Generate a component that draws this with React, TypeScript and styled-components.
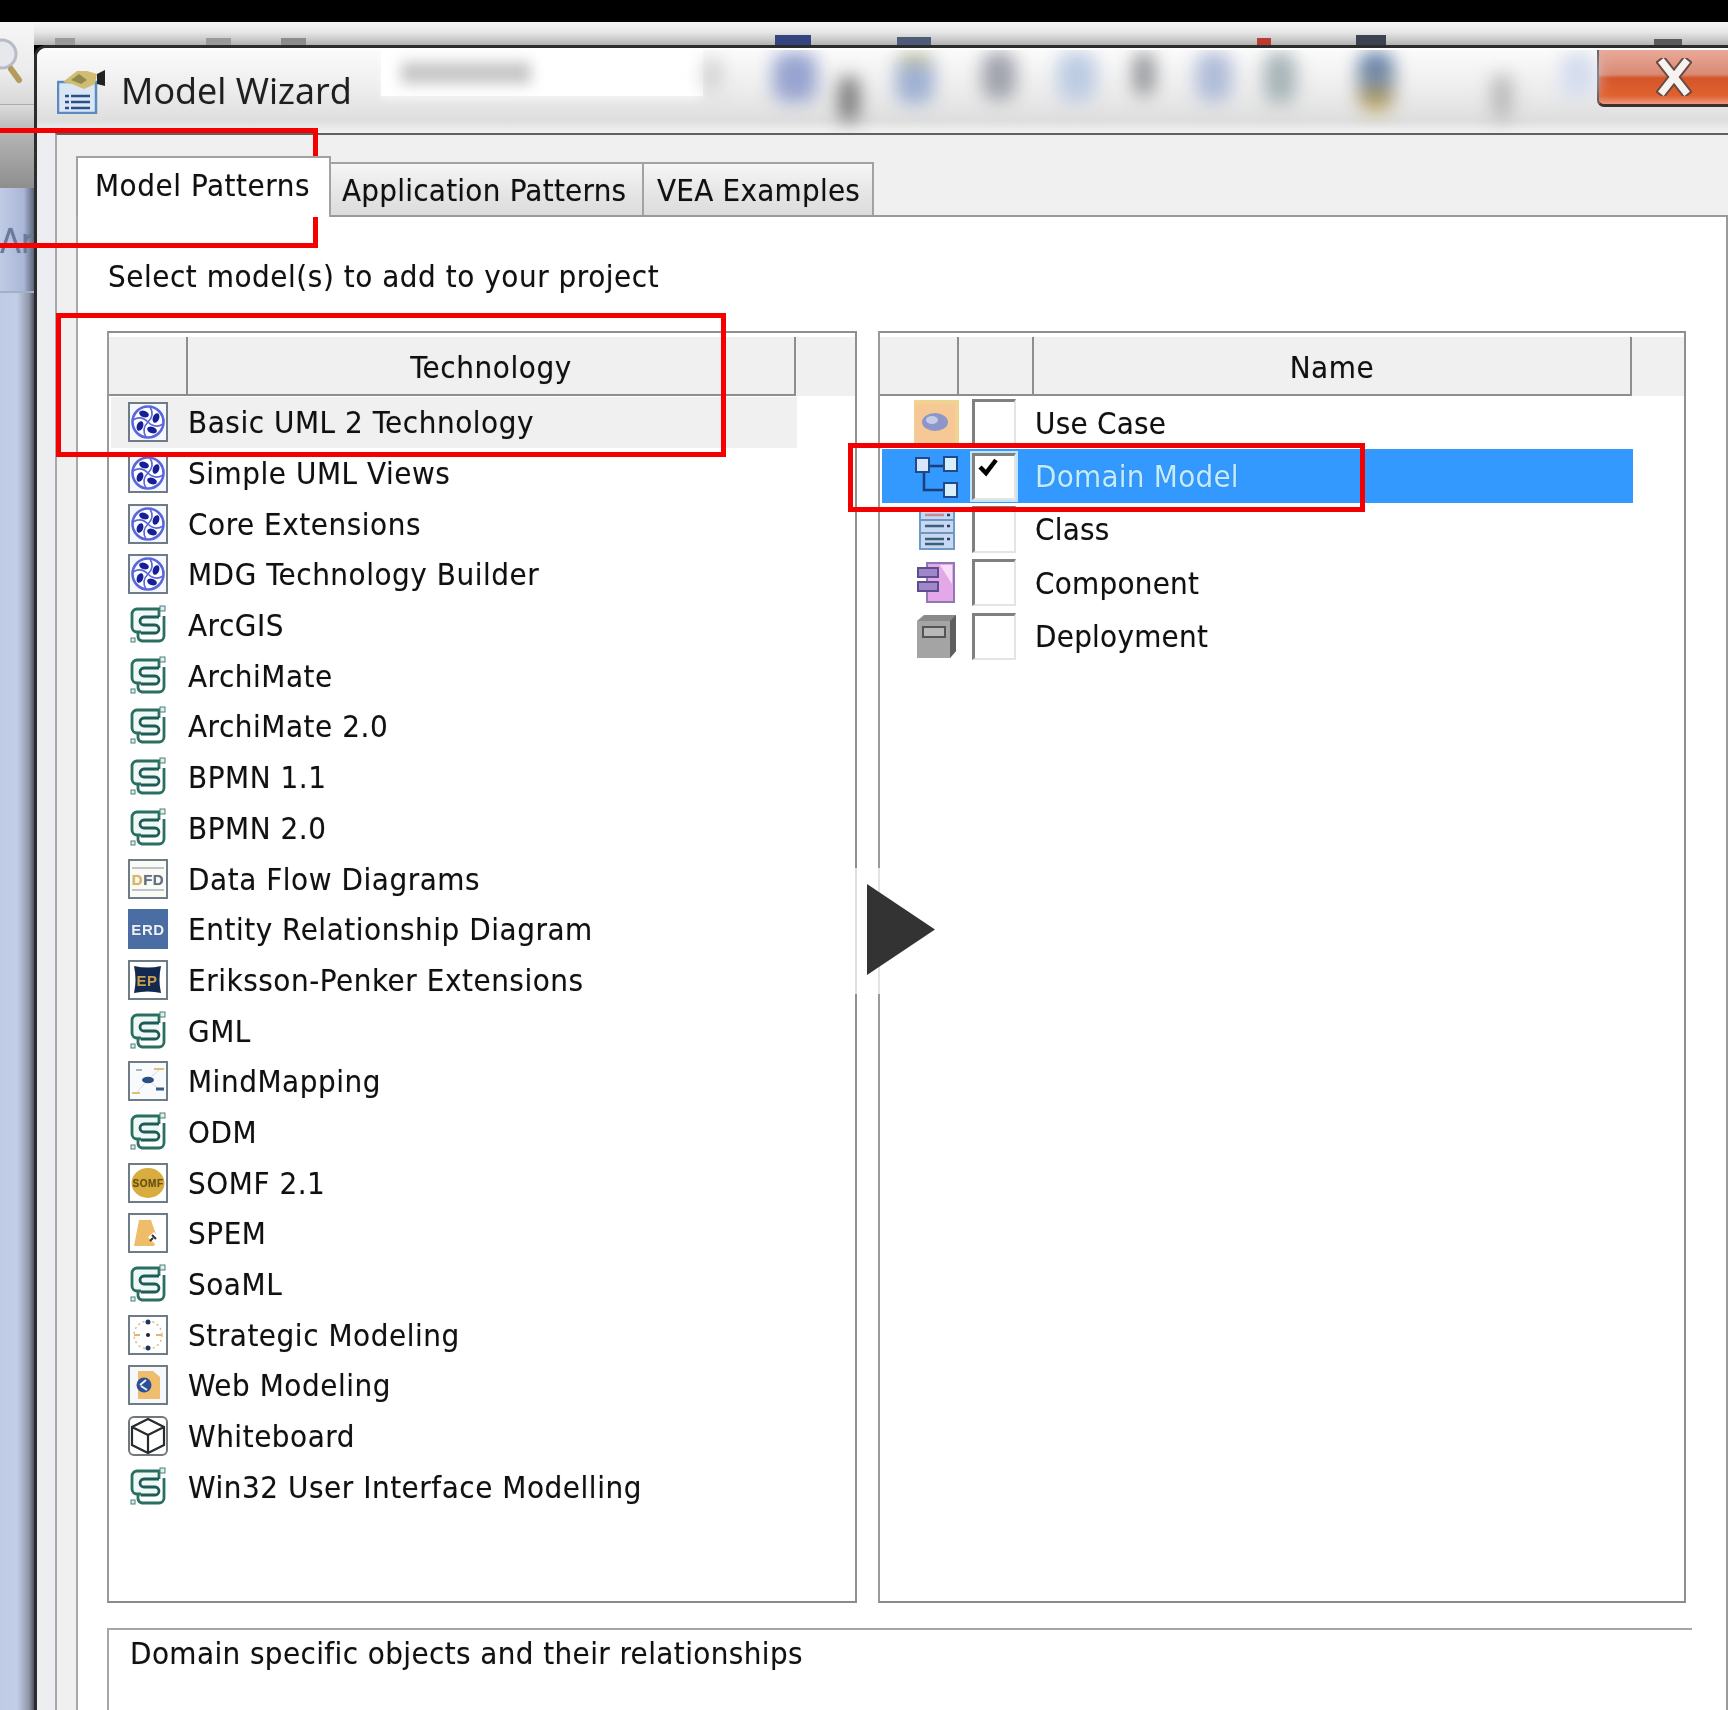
import React from "react";
import styled, { createGlobalStyle } from "styled-components";

const Global = createGlobalStyle`
  html, body { margin: 0; padding: 0; background: #000; }
  * { box-sizing: border-box; }
`;

const FONT = `"DejaVu Sans Condensed", "DejaVu Sans", sans-serif`;

const Screen = styled.div`
  position: relative;
  width: 1728px;
  height: 1710px;
  overflow: hidden;
  background: #000;
  padding-top: 22px;
  font-family: ${FONT};
  color: #101010;
  text-shadow: 0 0 1px rgba(0, 0, 0, 0.3);
  filter: blur(0.5px);
`;
const Desktop = styled.div`
  display: grid;
  grid-template-columns: 34px 1fr;
  grid-template-rows: 23px 1fr;
  height: 1688px;
`;
const Backdrop = styled.div`
  grid-row: 1 / 3;
  display: flex;
  flex-direction: column;
  overflow: hidden;
`;
const BackTop = styled.div`
  height: 83px;
  padding-top: 13px;
  border-bottom: 1px solid #aaa;
  background: linear-gradient(#f6f6f6, #ececec 60%, #d8d8d8);
`;
const BackGray = styled.div`
  height: 83px;
  background: linear-gradient(#dcdcdc, #b4b4b4 35%, #8e8e8e);
`;
const BackBlue = styled.div`
  height: 105px;
  padding-top: 33px;
  border-bottom: 2px solid #a4aec4;
  background: linear-gradient(90deg, #c0cce6 0, #a9b6d6 70%, #5d6578 100%);
  color: #6c7a9a;
  font-size: 34px;
  line-height: 40px;
  white-space: nowrap;
`;
const BackRest = styled.div`
  flex: 1;
  background: linear-gradient(90deg, #bfcbe6 0, #c2cde6 50%, #8e96a8 85%, #4e5460 100%);
`;
const TopStrip = styled.div`
  display: flex;
  align-items: flex-end;
  background: linear-gradient(#f6f6f6, #e6e6e6 45%, #b4b4b4);
  overflow: hidden;
`;
const Peek = styled.div<{ $gap: number; $w: number; $h: number; $c: string }>`
  flex: none;
  margin-left: ${(p) => p.$gap}px;
  width: ${(p) => p.$w}px;
  height: ${(p) => p.$h}px;
  background: ${(p) => p.$c};
`;
const Window = styled.div`
  display: flex;
  flex-direction: column;
  min-height: 0;
  border-left: 3px solid #2c2c2c;
  border-top: 3px solid #2c2c2c;
  border-top-left-radius: 12px;
  background: linear-gradient(90deg, #eceef2, #e6e8ea);
  overflow: hidden;
`;
const TitleBar = styled.div`
  flex: none;
  display: flex;
  align-items: flex-start;
  height: 85px;
  border-top: 2px solid #fff;
  background: linear-gradient(#fbfbfb, #ececec 50%, #dedede 85%, #f2f2f2);
  overflow: hidden;
`;
const TitleIcon = styled.svg`
  flex: none;
  width: 50px;
  height: 46px;
  margin: 18px 0 0 20px;
`;
const TitleText = styled.div`
  flex: none;
  width: 244px;
  margin: 19px 0 0 14px;
  font-family: "Open Sans", sans-serif;
  font-size: 36px;
  line-height: 44px;
  color: #1e1e1e;
  white-space: nowrap;
`;
const WhitePatch = styled.div`
  flex: none;
  display: flex;
  align-items: center;
  width: 322px;
  height: 46px;
  margin-left: 16px;
  padding-left: 20px;
  background: #fff;
  box-shadow: 0 4px 8px rgba(255, 255, 255, 0.5);
`;
const PatchSmudge = styled.div`
  width: 130px;
  height: 22px;
  background: #c6c6c6;
  filter: blur(7px);
`;
const Smudge = styled.div<{ $gap: number; $w: number; $h: number; $top: number; $c: string }>`
  flex: none;
  width: ${(p) => p.$w}px;
  height: ${(p) => p.$h}px;
  margin: ${(p) => p.$top}px 0 0 ${(p) => p.$gap}px;
  border-radius: 14px;
  background: ${(p) => p.$c};
  filter: blur(9px);
`;
const CloseButton = styled.div`
  flex: none;
  margin-left: auto;
  display: flex;
  align-items: center;
  justify-content: center;
  padding-left: 20px;
  width: 131px;
  height: 57px;
  border-left: 2px solid #555;
  border-bottom: 3px solid #40302c;
  border-bottom-left-radius: 7px;
  background: linear-gradient(#e9aa98, #d98a74 45%, #d5552a 52%, #e0622f 85%, #eb9a82);
`;
const Client = styled.div`
  flex: 1;
  min-height: 0;
  display: flex;
  flex-direction: column;
  margin-left: 18px;
  padding: 21px 0 0 19px;
  border-left: 2px solid #a8a8a8;
  border-top: 2px solid #606060;
  background: #f0f0f0;
`;
const TabRow = styled.div`
  flex: none;
  display: flex;
  align-items: flex-end;
  height: 59px;
  position: relative;
  z-index: 1;
`;
const Tab = styled.div<{ $active?: boolean; $w: number; $pad: number; $ls: number }>`
  flex: none;
  width: ${(p) => p.$w}px;
  height: ${(p) => (p.$active ? 61 : 53)}px;
  margin-bottom: ${(p) => (p.$active ? -2 : 0)}px;
  padding-top: ${(p) => (p.$active ? 7 : 6)}px;
  padding-left: ${(p) => p.$pad}px;
  border: 2px solid #a2a2a2;
  border-bottom: 0;
  border-left-width: ${(p) => (p.$active ? 2 : 0)}px;
  background: ${(p) => (p.$active ? "#fff" : "linear-gradient(#f6f6f6, #e6e6e6 55%, #dcdcdc)")};
  font-size: 31px;
  letter-spacing: ${(p) => p.$ls}px;
  line-height: 40px;
  white-space: nowrap;
`;
const Page = styled.div`
  flex: 1;
  min-height: 0;
  display: flex;
  flex-direction: column;
  padding: 39px 0 0 29px;
  border-top: 2px solid #9a9a9a;
  border-left: 2px solid #a8a8a8;
  border-right: 2px solid #9a9a9a;
  background: #fff;
`;
const Prompt = styled.div`
  flex: none;
  height: 40px;
  margin: 0 0 35px 1px;
  font-size: 31px;
  letter-spacing: 0.55px;
  line-height: 40px;
  white-space: nowrap;
`;
const Lists = styled.div`
  flex: none;
  display: flex;
  gap: 21px;
  height: 1272px;
`;
const ListBox = styled.div<{ $w: number }>`
  flex: none;
  width: ${(p) => p.$w}px;
  padding-top: 4px;
  border: 2px solid;
  border-color: #8f8f8f #8f8f8f #8a8a8a #9a9a9a;
`;
const Header = styled.div`
  display: flex;
  height: 59px;
  background: #f0f0f0;
`;
const HeadCell = styled.div<{ $w: number }>`
  flex: none;
  width: ${(p) => p.$w}px;
  display: flex;
  align-items: center;
  justify-content: center;
  padding-top: 3px;
  border-bottom: 2px solid #8e8e8e;
  border-right: 2px solid #8e8e8e;
  font-size: 31px;
  letter-spacing: 0.6px;
`;
const LeftRows = styled.div`
  padding-top: 1px;
`;
const LeftRow = styled.div<{ $selected?: boolean }>`
  display: flex;
  align-items: center;
  gap: 20px;
  width: 686px;
  height: 50.7px;
  margin-left: 2px;
  padding-left: 17px;
  background: ${(p) => (p.$selected ? "#f0f0f0" : "transparent")};
  font-size: 31px;
  letter-spacing: 0.55px;
  white-space: nowrap;
`;
const RightRow = styled.div<{ $selected?: boolean }>`
  display: flex;
  align-items: center;
  width: 751px;
  height: 53.4px;
  margin-left: 2px;
  background: ${(p) => (p.$selected ? "#3399ff" : "transparent")};
  color: ${(p) => (p.$selected ? "#c4ecff" : "#101010")};
  font-size: 31px;
  letter-spacing: 0.25px;
  white-space: nowrap;
`;
const RowIconCell = styled.div`
  flex: none;
  width: 75px;
  padding-left: 32px;
  display: flex;
`;
const CheckCell = styled.div`
  flex: none;
  width: 75px;
  padding-left: 15px;
`;
const CheckBox = styled.div<{ $selected?: boolean }>`
  width: 44px;
  height: 47px;
  padding: 2px 0 0 3px;
  background: #fff;
  border-style: solid;
  border-width: 3px 2px 2px 3px;
  border-color: #808080 #e4e4e4 #e4e4e4 #808080;
  outline: ${(p) => (p.$selected ? "2px solid #bfe4fb" : "none")};
`;
const CheckMark = styled.svg`
  display: block;
  width: 20px;
  height: 20px;
`;
const RowName = styled.div`
  padding-left: 3px;
`;
const Description = styled.div`
  flex: 1;
  width: 1585px;
  margin-top: 25px;
  padding: 1px 0 0 21px;
  border-top: 2px solid #a6a6a6;
  border-left: 2px solid #a6a6a6;
  font-size: 31px;
  letter-spacing: 0.4px;
  line-height: 44px;
  white-space: nowrap;
`;
const RedBox = styled.div<{ $l: number; $t: number; $w: number; $h: number }>`
  position: absolute;
  left: ${(p) => p.$l}px;
  top: ${(p) => p.$t}px;
  width: ${(p) => p.$w}px;
  height: ${(p) => p.$h}px;
  border: 5px solid #f40000;
  pointer-events: none;
`;
const PlayGlow = styled.div`
  position: absolute;
  left: 848px;
  top: 868px;
  width: 42px;
  height: 126px;
  background: rgba(255, 255, 255, 0.72);
`;
const PlayMark = styled.svg`
  position: absolute;
  left: 866px;
  top: 883px;
  width: 70px;
  height: 93px;
`;

const IconSvg = styled.svg`
  flex: none;
  display: block;
  width: 40px;
  height: 40px;
`;
const WideIcon = styled(IconSvg)`
  width: 46px;
  height: 46px;
`;

const Frame = ({ fill = "#fbfbfb" }: { fill?: string }) => (
  <rect x="1" y="1" width="38" height="38" fill={fill} stroke="#6e7c88" strokeWidth="2" />
);

const Uml = () => (
  <IconSvg viewBox="0 0 40 40">
    <Frame fill="#f6f7ff" />
    <circle cx="20" cy="20" r="15.5" fill="#fff" stroke="#5a66dc" strokeWidth="2.6" />
    {[0, 90, 180, 270].map((a) => (
      <g key={a} transform={`rotate(${a} 20 20)`}>
        <ellipse cx="16" cy="12" rx="5" ry="3.2" fill="#141f98" transform="rotate(20 16 12)" />
        <path d="M20 20 Q27 13 22 5" fill="none" stroke="#5a66dc" strokeWidth="1.6" />
      </g>
    ))}
  </IconSvg>
);
const Green = () => (
  <IconSvg viewBox="0 0 40 40">
    <path d="M4 9a5 5 0 0 1 5-5H31V30H9a5 5 0 0 1-5-5Z" fill="#eef8f4" />
    <g fill="none" stroke="#2b6f60" strokeWidth="2.8">
      <path d="M31 12V4H9a5 5 0 0 0-5 5v13a5 5 0 0 0 5 5h4" />
      <path d="M31 12H16a4 4 0 0 0 0 8H27a4 4 0 0 1 0 8H13" stroke="#1f5a58" />
      <path d="M36 11V31a5 5 0 0 1-5 5H14a5 5 0 0 1-4-4V27" />
    </g>
    <rect x="32" y="1" width="5" height="5" fill="#dff0ea" stroke="#4a7f78" />
    <rect x="3" y="33" width="4" height="4" fill="#dff0ea" stroke="#4a7f78" />
  </IconSvg>
);
const Dfd = () => (
  <IconSvg viewBox="0 0 40 40">
    <Frame fill="#fbfbf4" />
    <path d="M4 9H36M4 31H36" stroke="#b9c4cf" strokeWidth="2" />
    <text x="20" y="26" textAnchor="middle" fontFamily="Liberation Sans, sans-serif" fontSize="15" fontWeight="700" fill="#5d7086">
      <tspan fill="#d9b860">D</tspan>FD
    </text>
  </IconSvg>
);
const Erd = () => (
  <IconSvg viewBox="0 0 40 40">
    <rect x="0" y="0" width="40" height="40" fill="#4a6da3" />
    <text x="20" y="26" textAnchor="middle" fontFamily="Liberation Sans, sans-serif" fontSize="15" fontWeight="700" fill="#eef2f8">ERD</text>
  </IconSvg>
);
const Ep = () => (
  <IconSvg viewBox="0 0 40 40">
    <Frame fill="#fff" />
    <path d="M6 6Q20 9 33 6Q30 20 33 33Q20 30 6 33Q9 20 6 6Z" fill="#13294f" />
    <text x="19" y="26" textAnchor="middle" fontFamily="Liberation Sans, sans-serif" fontSize="15" fontWeight="700" fill="#c9a050">EP</text>
  </IconSvg>
);
const Mind = () => (
  <IconSvg viewBox="0 0 40 40">
    <Frame fill="#f8fafc" />
    <path d="M20 19L32 8M20 19L8 32M20 19L32 29" stroke="#d6dce2" strokeWidth="1" />
    <path d="M26 8H36M4 32H12" stroke="#e0bd78" strokeWidth="2" />
    <path d="M8 9H14" stroke="#aab4c0" strokeWidth="2" />
    <ellipse cx="20" cy="19" rx="6" ry="3.2" fill="#264f84" />
    <path d="M28 28H36" stroke="#365c8a" strokeWidth="3" />
  </IconSvg>
);
const Somf = () => (
  <IconSvg viewBox="0 0 40 40">
    <Frame fill="#fff" />
    <ellipse cx="20" cy="20" rx="16.5" ry="15" fill="#d8ac3e" />
    <text x="20" y="24" textAnchor="middle" fontFamily="Liberation Sans, sans-serif" fontSize="10" fontWeight="700" fill="#6a5212">SOMF</text>
  </IconSvg>
);
const Spem = () => (
  <IconSvg viewBox="0 0 40 40">
    <Frame fill="#fff" />
    <path d="M11 7H23L26 16L30 25L26 33H6Z" fill="#efbc6a" />
    <path d="M20 24L26 19L33 25L27 31Z" fill="#fff" />
    <path d="M24 22L28 26M22 28L25 25" stroke="#333" strokeWidth="2" />
  </IconSvg>
);
const Strategic = () => (
  <IconSvg viewBox="0 0 40 40">
    <Frame fill="#fff" />
    <circle cx="20" cy="20" r="14" fill="none" stroke="#d9b98a" strokeWidth="1.5" strokeDasharray="2 3" />
    <path d="M6 20H12M28 20H34" stroke="#e5b56a" strokeWidth="2" />
    <circle cx="20" cy="7" r="2.5" fill="#1d3560" />
    <circle cx="20" cy="20" r="2" fill="#222" />
    <circle cx="20" cy="33" r="2.5" fill="#1d3560" />
  </IconSvg>
);
const Web = () => (
  <IconSvg viewBox="0 0 40 40">
    <Frame fill="#f6f8fc" />
    <path d="M10 6H25L32 12V34H10Z" fill="#efbd6e" />
    <circle cx="16" cy="20" r="7.5" fill="#2d4f96" />
    <path d="M12 20L18 15M13 21L19 25" stroke="#e8eefc" strokeWidth="2" />
  </IconSvg>
);
const Whiteboard = () => (
  <IconSvg viewBox="0 0 40 40">
    <rect x="1" y="1" width="38" height="38" rx="5" fill="#fff" stroke="#70787e" strokeWidth="2" />
    <path d="M20 3L36 11V29L20 37L4 29V11ZM4 11L20 19L36 11M20 19V37" fill="none" stroke="#2a2a2a" strokeWidth="2.2" />
  </IconSvg>
);

const UseCaseIcon = () => (
  <WideIcon viewBox="3 0 46 46">
    <rect x="1" y="1" width="46" height="44" fill="#f4cf96" stroke="#ecd68e" strokeWidth="2" />
    <rect x="4" y="4" width="40" height="38" fill="#f6c896" />
    <ellipse cx="24" cy="22" rx="13" ry="9" fill="#8c96c8" />
    <ellipse cx="21" cy="20" rx="6" ry="4" fill="#c6cce6" />
  </WideIcon>
);
const DomainIcon = () => (
  <WideIcon viewBox="0 0 46 46">
    <path d="M16 13H30M10 20V37H30" fill="none" stroke="#1c3f78" strokeWidth="2.5" />
    <rect x="2" y="5" width="13" height="14" fill="#d8e4fb" stroke="#204a8c" strokeWidth="2" />
    <rect x="30" y="4" width="13" height="14" fill="#d8f0fb" stroke="#204a8c" strokeWidth="2" />
    <rect x="30" y="30" width="13" height="14" fill="#d8f0fb" stroke="#204a8c" strokeWidth="2" />
  </WideIcon>
);
const ClassIcon = () => (
  <WideIcon viewBox="0 0 46 46">
    <rect x="6" y="3" width="34" height="40" fill="#c6d8f2" stroke="#6f9ac6" strokeWidth="2" />
    <path d="M7 14H39M7 27H39" stroke="#7096c0" strokeWidth="2" />
    <path d="M11 9H30" stroke="#c68a96" strokeWidth="2.5" />
    <path d="M11 20H30M11 33H30M11 38H30" stroke="#3c5e78" strokeWidth="2.5" />
    <path d="M33 9H36M33 20H36M33 33H36" stroke="#2c3e60" strokeWidth="2.5" />
  </WideIcon>
);
const ComponentIcon = () => (
  <WideIcon viewBox="-2 0 46 46">
    <path d="M11 3H38V42H11Z" fill="#e4a8e8" stroke="#9078b8" strokeWidth="2" />
    <path d="M24 5H36V24Z" fill="#f6dff6" />
    <rect x="2" y="8" width="20" height="9" fill="#a088c8" stroke="#5c4c90" strokeWidth="2" />
    <rect x="2" y="22" width="20" height="9" fill="#a088c8" stroke="#5c4c90" strokeWidth="2" />
  </WideIcon>
);
const DeploymentIcon = () => (
  <WideIcon viewBox="0 0 46 46">
    <path d="M3 8L10 2H42V38L36 45H3Z" fill="#8a8a8a" />
    <path d="M3 8H36V45H3Z" fill="#a4a4a4" />
    <path d="M36 8L42 2V38L36 45Z" fill="#5e5e5e" />
    <rect x="9" y="14" width="22" height="10" fill="#b8b8b8" stroke="#555" strokeWidth="2" />
  </WideIcon>
);

type LeftItem = { name: string; Icon: React.FC };
const leftItems: LeftItem[] = [
  { name: "Basic UML 2 Technology", Icon: Uml },
  { name: "Simple UML Views", Icon: Uml },
  { name: "Core Extensions", Icon: Uml },
  { name: "MDG Technology Builder", Icon: Uml },
  { name: "ArcGIS", Icon: Green },
  { name: "ArchiMate", Icon: Green },
  { name: "ArchiMate 2.0", Icon: Green },
  { name: "BPMN 1.1", Icon: Green },
  { name: "BPMN 2.0", Icon: Green },
  { name: "Data Flow Diagrams", Icon: Dfd },
  { name: "Entity Relationship Diagram", Icon: Erd },
  { name: "Eriksson-Penker Extensions", Icon: Ep },
  { name: "GML", Icon: Green },
  { name: "MindMapping", Icon: Mind },
  { name: "ODM", Icon: Green },
  { name: "SOMF 2.1", Icon: Somf },
  { name: "SPEM", Icon: Spem },
  { name: "SoaML", Icon: Green },
  { name: "Strategic Modeling", Icon: Strategic },
  { name: "Web Modeling", Icon: Web },
  { name: "Whiteboard", Icon: Whiteboard },
  { name: "Win32 User Interface Modelling", Icon: Green },
];
const rightItems: { name: string; Icon: React.FC; selected?: boolean }[] = [
  { name: "Use Case", Icon: UseCaseIcon },
  { name: "Domain Model", Icon: DomainIcon, selected: true },
  { name: "Class", Icon: ClassIcon },
  { name: "Component", Icon: ComponentIcon },
  { name: "Deployment", Icon: DeploymentIcon },
];
const peeks = [
  { g: 21, w: 20, h: 7, c: "#9a9a9a" }, { g: 131, w: 25, h: 7, c: "#9a9a9a" }, { g: 50, w: 25, h: 7, c: "#8c8c8c" },
  { g: 469, w: 36, h: 10, c: "#33447e" }, { g: 86, w: 34, h: 8, c: "#4e5c78" }, { g: 326, w: 14, h: 7, c: "#b83b34" },
  { g: 85, w: 30, h: 10, c: "#3c4250" }, { g: 268, w: 28, h: 6, c: "#5a5a5a" },
];
const smudges = [
  { g: 0, w: 18, h: 34, t: 8, c: "#cfcfcf" }, { g: 52, w: 44, h: 50, t: 2, c: "#98a4d0" }, { g: 22, w: 20, h: 46, t: 26, c: "#777" },
  { g: 37, w: 38, h: 52, t: 2, c: "linear-gradient(#d8c878, #9fb0d2 30%)" }, { g: 48, w: 34, h: 48, t: 2, c: "#a0a2ac" }, { g: 42, w: 38, h: 50, t: 2, c: "#bccbe2" },
  { g: 37, w: 22, h: 44, t: 2, c: "#96989c" }, { g: 41, w: 36, h: 50, t: 2, c: "#b0bcd8" }, { g: 32, w: 32, h: 52, t: 2, c: "#a8b4b8" },
  { g: 62, w: 36, h: 58, t: 2, c: "linear-gradient(#5c7cae, #7c8ea0 50%, #c8a040)" }, { g: 98, w: 20, h: 46, t: 24, c: "#b8b8b8" }, { g: 49, w: 34, h: 46, t: 2, c: "#d4dcee" },
];

export default function App() {
  return (
    <Screen>
      <Global />
      <Desktop>
        <Backdrop>
          <BackTop>
            <svg width="34" height="60" viewBox="0 0 34 60">
              <circle cx="2" cy="19" r="14" fill="#e6e8ee" stroke="#b8bcc6" strokeWidth="3" />
              <path d="M11 34L19 45" stroke="#b49a5c" strokeWidth="6" strokeLinecap="round" />
            </svg>
          </BackTop>
          <BackGray />
          <BackBlue>Ar</BackBlue>
          <BackRest />
        </Backdrop>
        <TopStrip>
          {peeks.map((p, i) => (
            <Peek key={i} $gap={p.g} $w={p.w} $h={p.h} $c={p.c} />
          ))}
        </TopStrip>
        <Window>
          <TitleBar>
            <TitleIcon viewBox="0 0 50 46">
              <rect x="1" y="14" width="38" height="31" fill="#dbe6f4" stroke="#5b8ac0" strokeWidth="2.5" />
              <path d="M8 28H33M8 34H33M8 40H33" stroke="#2a4f86" strokeWidth="2.5" strokeDasharray="4 2 30 0" />
              <path d="M6 14L20 3H30L40 6L38 16L27 21L15 16Z" fill="#d0bc72" />
              <path d="M14 12L22 6L30 12L24 16Z" fill="#8f8a4c" />
              <path d="M40 6L48 2V18L40 16Z" fill="#222" />
            </TitleIcon>
            <TitleText>Model Wizard</TitleText>
            <WhitePatch>
              <PatchSmudge />
            </WhitePatch>
            {smudges.map((s, i) => (
              <Smudge key={i} $gap={s.g} $w={s.w} $h={s.h} $top={s.t} $c={s.c} />
            ))}
            <CloseButton>
              <svg width="36" height="38" viewBox="0 0 36 38">
                <path d="M7 5L29 33M29 5L7 33" stroke="#6a4a44" strokeWidth="11" strokeLinecap="square" />
                <path d="M7 5L29 33M29 5L7 33" stroke="#f6f2f0" strokeWidth="7" strokeLinecap="square" />
              </svg>
            </CloseButton>
          </TitleBar>
          <Client>
            <TabRow>
              <Tab $active $w={255} $pad={17} $ls={0.55}>Model Patterns</Tab>
              <Tab $w={313} $pad={11} $ls={0.25}>Application Patterns</Tab>
              <Tab $w={230} $pad={13} $ls={0.25}>VEA Examples</Tab>
            </TabRow>
            <Page>
              <Prompt>Select model(s) to add to your project</Prompt>
              <Lists>
                <ListBox $w={750}>
                  <Header>
                    <HeadCell $w={79} />
                    <HeadCell $w={608}>Technology</HeadCell>
                  </Header>
                  <LeftRows>
                    {leftItems.map(({ name, Icon }, i) => (
                      <LeftRow key={name} $selected={i === 0}>
                        <Icon />
                        {name}
                      </LeftRow>
                    ))}
                  </LeftRows>
                </ListBox>
                <ListBox $w={808}>
                  <Header>
                    <HeadCell $w={79} />
                    <HeadCell $w={75} />
                    <HeadCell $w={598}>Name</HeadCell>
                  </Header>
                  {rightItems.map(({ name, Icon, selected }) => (
                    <RightRow key={name} $selected={selected}>
                      <RowIconCell>
                        <Icon />
                      </RowIconCell>
                      <CheckCell>
                        <CheckBox $selected={selected}>
                          {selected && (
                            <CheckMark viewBox="0 0 20 20">
                              <path d="M2 9L8 15L18 2" fill="none" stroke="#000" strokeWidth="4.5" />
                            </CheckMark>
                          )}
                        </CheckBox>
                      </CheckCell>
                      <RowName>{name}</RowName>
                    </RightRow>
                  ))}
                </ListBox>
              </Lists>
              <Description>Domain specific objects and their relationships</Description>
            </Page>
          </Client>
        </Window>
      </Desktop>
      <PlayGlow />
      <PlayMark viewBox="0 0 70 93">
        <path d="M1 1L69 46.5L1 92Z" fill="#333" />
      </PlayMark>
      <RedBox $l={-10} $t={128} $w={328} $h={120} />
      <RedBox $l={56} $t={313} $w={670} $h={144} />
      <RedBox $l={848} $t={443} $w={517} $h={69} />
    </Screen>
  );
}
